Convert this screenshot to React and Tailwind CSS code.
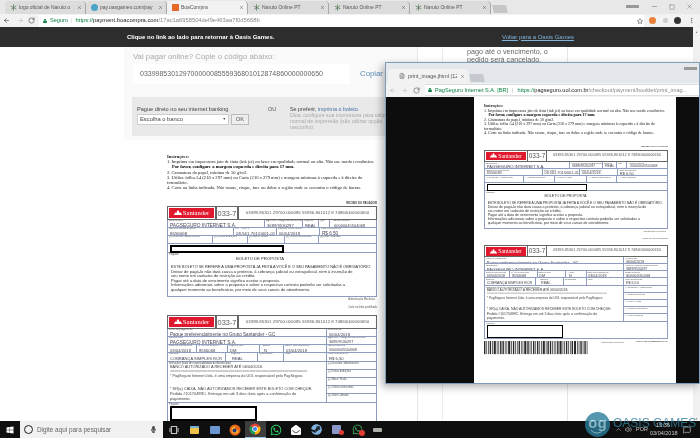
import React from "react";
import { FaWindows, FaSteam, FaWhatsapp, FaLock, FaRegStar, FaMicrophone, FaEnvelopeOpen } from "react-icons/fa";
import { ArrowLeft, ArrowRight, RotateCw, MoreVertical, Minus, Square, X, FileText, ChevronUp, Volume2, MessageSquare } from "lucide-react";

const sans = "font-['Liberation_Sans',Arial,sans-serif]";
const serif = "font-['Liberation_Serif','Times_New_Roman',serif]";

const Ninja = () => (
  <svg width="7" height="7" viewBox="0 0 10 10" className="shrink-0" fill="none" stroke="#5c7a5c" strokeWidth="1.1">
    <path d="M5 0.5v9M1 3l8 4M9 2.5l-7 5" />
  </svg>
);

function Tab({ label, active, icon }) {
  return (
    <div className={`flex items-center gap-[2px] h-[13px] w-[81px] pl-[5px] pr-[3px] text-[5px] rounded-t-sm border-r border-[#a8a8a8] shrink-0 ${active ? "bg-[#f2f2f2]" : "bg-[#dcdcdc]"}`}>
      {icon}
      <span className="flex-1 whitespace-nowrap overflow-hidden text-[#555]">{label}</span>
      <X size={5} className="text-[#444] shrink-0" />
    </div>
  );
}

function Cell({ label, value, size = "text-[4.8px]", className = "" }) {
  return (
    <div className={`border-r border-[#8e9cc0] last:border-r-0 px-[1px] overflow-hidden leading-none min-w-0 ${className}`}>
      <div className="text-[2.6px] text-[#555] whitespace-nowrap h-[3px]">{label}</div>
      <div className={`${size} text-[#445] whitespace-nowrap pl-[1px] mt-[0.5px]`}>{value}</div>
    </div>
  );
}

function Row({ children, h, cols }) {
  return <div className={`grid border-b border-[#8e9cc0] ${h} ${cols}`}>{children}</div>;
}

function Head() {
  return (
    <div className="flex h-[14px] border border-[#666] bg-white">
      <div className="w-[49px] border-r-2 border-[#666] p-[1px] shrink-0">
        <div className={`h-full bg-[#e0182d] text-white flex items-center justify-center gap-[1px] text-[6.6px] ${serif}`}>
          <svg width="8" height="6" viewBox="0 0 8 6" fill="#fff"><path d="M4 0c1 1 1.5 1.5 1 3 1-.5 1-1 1-1 1 1 2 2 2 3H0c0-1 1-2 2-3 0 .5 0 1 .5 1C2.5 2 3 1 4 0z" /></svg>
          <span>Santander</span>
        </div>
      </div>
      <div className="w-[22px] border-r-2 border-[#666] text-[7.4px] text-[#555] flex items-center justify-center shrink-0 whitespace-nowrap">033-7</div>
      <div className="flex-1 text-[4.4px] text-[#555] flex items-center justify-center whitespace-nowrap overflow-hidden">03399.85301 29700.000085 55936.801012 8 74860000000650</div>
    </div>
  );
}

const bars = [2,1,1,2,1,3,1,1,2,2,1,1,3,1,2,1,1,2,1,1,3,2,1,1,2,1,2,1,1,3,1,2,2,1,1,1,2,3,1,1,2,1,1,2,3,1,1,2,1,2,1,1,2,1,3,1];

function Barcode() {
  let x = 0;
  return (
    <svg width="119" height="15" className="block shrink-0">
      {bars.map((b, i) => {
        const r = <rect key={i} x={x} y="0" width={b * 0.8} height="15" fill="#2a2a2a" />;
        x += b * 0.8 + 1.1;
        return r;
      })}
    </svg>
  );
}

function Boleto({ popup }) {
  return (
    <div className={`w-[210px] text-[#333] ${sans} ${popup ? "[zoom:0.875]" : ""}`}>
      <div className={`${serif} text-[4.6px] leading-[5.2px] text-[#222] mb-[12px]`}>
        <p className="font-bold">Instruções:</p>
        <p>1. Imprima em impressora jato de tinta (ink jet) ou laser em qualidade normal ou alta. Não use modo econômico.</p>
        <p className="font-bold pl-[5px] text-[#000]">Por favor, configure a margem esquerda e direita para 17 mm.</p>
        <p>2. Gramatura do papel, mínima de 50 g/m2.</p>
        <p>3. Utilize folha A4 (210 x 297 mm) ou Carta (216 x 279 mm) e margens mínimas à esquerda e à direita do formulário.</p>
        <p>4. Corte na linha indicada. Não rasure, risque, fure ou dobre a região onde se encontra o código de barras.</p>
      </div>
      <div className="text-right text-[2.8px] font-bold text-[#444] leading-[3px] mb-[1px]">RECIBO DO PAGADOR</div>
      <Head />
      <div className="border-x border-[#8e9cc0]">
        <Row h="h-[8px]" cols="grid-cols-[97px_38px_16px_11px_1fr]">
          <Cell label="Beneficiário" value="PAGSEGURO INTERNET S.A." />
          <Cell label="Agência / Código do Beneficiário" value="3689/9530297" size="text-[4.2px]" />
          <Cell label="Espécie" value="REAL" size="text-[4.2px]" />
          <Cell label="Qtd" value="" />
          <Cell label="Nosso número" value="00000045504068" size="text-[4px]" className="pl-[3px]" />
        </Row>
        <Row h="h-[8px]" cols="grid-cols-[66px_43px_43px_1fr]">
          <Cell label="Número do documento" value="8556068" size="text-[4.4px]" />
          <Cell label="CPF / CNPJ" value="08.561.701/0001-01" size="text-[4.4px]" />
          <Cell label="Data de Vencimento" value="06/04/2018" size="text-[4.2px]" />
          <Cell label="Valor Documento" value="R$ 6,50" size="text-[4.6px]" />
        </Row>
        <Row h="h-[8px]" cols="grid-cols-[45px_35px_37px_34px_1fr]">
          <Cell label="(-) Desconto / Abatimentos" value="" />
          <Cell label="(-) Outras deduções" value="" />
          <Cell label="(+) Mora / Multa" value="" />
          <Cell label="(+) Outros acréscimos" value="" />
          <Cell label="(=) Valor Cobrado" value="" />
        </Row>
        <Row h="h-[9px]" cols="grid-cols-1">
          <div className="pl-[2px] pt-[1px]"><div className="w-[114px] h-[8px] border-2 border-black bg-white" /></div>
        </Row>
        <div className="text-[2.6px] text-[#555] leading-[3px] pl-[1px]">Pagador</div>
        <div className="border-b border-[#8e9cc0] h-[40px] px-[3px] text-[4.1px] leading-[4.6px] text-[#333]">
          <p className="text-[4.2px] pl-[65px] mb-[3px] mt-[1px] whitespace-nowrap">BOLETO DE PROPOSTA</p>
          <p className="text-[3.85px] whitespace-nowrap">ESTE BOLETO SE REFERE A UMA PROPOSTA JÁ FEITA A VOCÊ E O SEU PAGAMENTO NÃO É OBRIGATÓRIO.</p>
          <p className="whitespace-nowrap">Deixar de pagá-lo não dará causa a protesto, à cobrança judicial ou extrajudicial, nem à inserção de</p>
          <p className="whitespace-nowrap">seu nome em cadastro de restrição ao crédito.</p>
          <p className="whitespace-nowrap">Pagar até a data de vencimento significa aceitar a proposta.</p>
          <p className="whitespace-nowrap">Informações adicionais sobre a proposta e sobre o respectivo contrato poderão ser solicitadas a</p>
          <p className="whitespace-nowrap">qualquer momento ao beneficiário, por meio de seus canais de atendimento.</p>
        </div>
      </div>
      <div className="text-right text-[2.6px] text-[#555] leading-[3px] mt-[1px] pr-[2px]">Autenticação Mecânica</div>
      <div className="text-right text-[2.6px] text-[#555] leading-[3px] mt-[5px] mb-[6px]">Corte na linha pontilhada</div>
      <Head />
      <div className="border-x border-[#8e9cc0] grid grid-cols-[159px_1fr]">
        <div className="border-r border-[#8e9cc0]">
          <Row h="h-[8px]" cols="grid-cols-1"><Cell label="Local de pagamento" value="Pague preferencialmente no Grupo Santander - GC" size="text-[4.6px]" /></Row>
          <Row h="h-[8px]" cols="grid-cols-1"><Cell label="Beneficiário" value="PAGSEGURO INTERNET S.A." /></Row>
          <Row h="h-[8px]" cols="grid-cols-[29px_31px_32px_24px_1fr]">
            <Cell label="Data do Documento" value="03/04/2018" size="text-[4.2px]" />
            <Cell label="Nº do Documento" value="8556068" size="text-[4.2px]" />
            <Cell label="Espécie doc." value="DM" size="text-[4.2px]" />
            <Cell label="Aceite" value="N" size="text-[4.2px]" className="pl-[3px]" />
            <Cell label="Data Processamento" value="03/04/2018" size="text-[4.2px]" />
          </Row>
          <Row h="h-[9px]" cols="grid-cols-[58px_32px_26px_1fr]">
            <Cell label="Carteira" value="COBRANÇA SIMPLES RCR" size="text-[4.1px]" />
            <Cell label="Espécie" value="REAL" size="text-[4.2px]" className="pl-[5px]" />
            <Cell label="Quantidade" value="" />
            <Cell label="Valor" value="" />
          </Row>
          <div className="h-[40px] text-[3.9px] leading-[4px] px-[2px] text-[#444]">
            <p className="text-[2.6px] leading-[3px] -ml-[1px] whitespace-nowrap">Instruções (texto de responsabilidade do Beneficiário)</p>
            <p className="whitespace-nowrap">BANCO AUTORIZADO A RECEBER ATÉ 06/04/2018.</p>
            <p className="leading-[3px] tracking-tighter text-[#999] whitespace-nowrap overflow-hidden">==================================================================</p>
            <p className="mt-[2px] whitespace-nowrap text-[3.7px]">* PagSeguro Internet Ltda. é uma empresa do UOL responsável pelo PagSeguro.</p>
            <p className="mt-[9px] whitespace-nowrap">* SR(a) CAIXA, NÃO AUTORIZAMOS RECEBER ESTE BOLETO COM CHEQUE.</p>
            <p className="mt-[1px] whitespace-nowrap">Pedido #1017049RC. Entrega em até 3 dias úteis após a confirmação do</p>
            <p className="mt-[1px]">pagamento.</p>
          </div>
        </div>
        <div>
          <Row h="h-[8px]" cols="grid-cols-1"><Cell label="Vencimento" value="06/04/2018" size="text-[4.2px]" /></Row>
          <Row h="h-[8px]" cols="grid-cols-1"><Cell label="Agência / Código do Beneficiário" value="3689/9530297" size="text-[3.8px]" /></Row>
          <Row h="h-[8px]" cols="grid-cols-1"><Cell label="Nosso Número" value="00000045504068" size="text-[3.6px]" /></Row>
          <Row h="h-[9px]" cols="grid-cols-1"><Cell label="Valor Documento" value="R$ 6,50" size="text-[4.2px]" /></Row>
          {["(-) Desconto / Abatimentos", "(-) Outras deduções", "(+) Mora / Multa", "(+) Outros acréscimos", "(=) Valor Cobrado"].map((t) => (
            <div key={t} className="h-[8px] border-b border-[#8e9cc0] text-[2.6px] leading-[3px] px-[1px] text-[#555] last:border-b-0">{t}</div>
          ))}
        </div>
      </div>
      <div className="border border-[#8e9cc0] h-[20px]">
        <div className="text-[2.6px] text-[#555] leading-[3px] pl-[1px]">Pagador</div>
        <div className="ml-[2px] w-[87px] h-[15px] border-2 border-black bg-white" />
      </div>
      <div className="flex items-start mt-[3px]">
        <Barcode />
        <div className="text-[2.6px] text-[#555] leading-[3px] ml-[14px] whitespace-nowrap">Autenticação Mecânica</div>
        <div className="flex-1" />
        <div className="text-[2.8px] font-bold text-[#444] leading-[3px] whitespace-nowrap">FICHA DE COMPENSAÇÃO</div>
      </div>
    </div>
  );
}

function Popup() {
  return (
    <div className="absolute left-[385px] top-[62px] w-[315px] h-[322px] flex flex-col bg-[#e4e8ec] border border-[#7f9db9] shadow-[-3px_3px_8px_rgba(0,0,0,0.3)] overflow-hidden">
      <div className="h-[20px] flex items-end pl-[2px] pr-[2px] shrink-0">
        <div className="w-[81px] h-[14px] bg-[#f2f2f2] rounded-t-sm flex items-center gap-[3px] pl-[11px] pr-[4px] text-[5.4px] text-[#555] shrink-0">
          <FileText size={6} className="shrink-0" />
          <span className="whitespace-nowrap overflow-hidden flex-1">print_image.jhtml (1240×</span>
          <X size={5} className="shrink-0" />
        </div>
        <div className="w-[14px] h-[8px] ml-[1px] mb-[1px] bg-[#c6cad0] skew-x-12" />
        <div className="flex-1" />
        <div className="self-start mt-[4px] w-[13px] h-[3px] bg-[#999] blur-[0.5px]" />
      </div>
      <div className="h-[14px] bg-[#f2f2f2] flex items-center gap-[5px] pl-[3px] shrink-0">
        <ArrowLeft size={7} className="text-[#bbb]" />
        <ArrowRight size={7} className="text-[#bbb]" />
        <RotateCw size={7} className="text-[#555]" />
        <div className="flex-1 h-[12px] bg-white flex items-center gap-[3px] pl-[3px] text-[5.6px] border-y border-[#ddd] whitespace-nowrap overflow-hidden">
          <FaLock size={4} className="text-[#0b8043] shrink-0" />
          <span className="text-[#0b8043]">PagSeguro Internet S.A. [BR]</span>
          <span className="text-[#bbb] mx-[1px]">|</span>
          <span className="text-[#888]"><span className="text-[#0b8043]">https://</span><span className="text-[#222]">pagseguro.uol.com.br</span>/checkout/payment/booklet/print_imag...</span>
        </div>
      </div>
      <div className="flex-1 bg-[#0d0d0d] flex pl-[88px] min-h-0 overflow-hidden">
        <div className="w-[202px] bg-white pl-[10px] pt-[7px] overflow-hidden">
          <Boleto popup />
        </div>
      </div>
    </div>
  );
}

const ChromeIcon = ({ s = 12 }) => (
  <svg width={s} height={s} viewBox="0 0 24 24">
    <circle cx="12" cy="12" r="11" fill="#db4437" />
    <path d="M12 12 L2.5 6.5 A11 11 0 0 0 12 23 Z" fill="#0f9d58" />
    <path d="M12 12 L12 23 A11 11 0 0 0 21.5 6.5 Z" fill="#f4b400" />
    <circle cx="12" cy="12" r="5.5" fill="#fff" />
    <circle cx="12" cy="12" r="4.2" fill="#4285f4" />
  </svg>
);

const FirefoxIcon = () => (
  <svg width="12" height="12" viewBox="0 0 24 24">
    <circle cx="12" cy="12" r="11" fill="#e8661c" />
    <path d="M12 5a7 7 0 1 0 7 7c-2 1-4 0-5-2-1 1-3 0-2-5z" fill="#f7b42c" />
    <circle cx="11" cy="13" r="4" fill="#2a3a7a" />
  </svg>
);

function Slot({ children, active }) {
  return <div className={`w-[20.4px] h-full flex items-center justify-center shrink-0 ${active ? "bg-[#3c3c3c] border-b border-[#9cc4e4]" : ""}`}>{children}</div>;
}

function Taskbar() {
  return (
    <div className="h-[17px] bg-[#0f0f0f] flex items-center shrink-0 relative overflow-hidden">
      <div className="w-[20px] flex justify-center shrink-0 text-white"><FaWindows size={8} /></div>
      <div className="w-[143px] h-full bg-[#f1f1f1] flex items-center pl-[4px] gap-[4px] text-[6.4px] text-[#666] shrink-0">
        <span className="w-[9px] h-[9px] rounded-full border-[1.5px] border-[#222] shrink-0" />
        <span className="flex-1 whitespace-nowrap">Digite aqui para pesquisar</span>
        <FaMicrophone size={7} className="text-[#444] mr-[6px]" />
      </div>
      <div className="w-[21px] flex justify-center text-[#ddd] shrink-0"><svg width="10" height="8" viewBox="0 0 10 9" fill="none" stroke="currentColor"><rect x="2" y="0.5" width="6" height="8" /><path d="M0.5 2v5M9.5 2v5" /></svg></div>
      <Slot><div className="w-[9px] h-[8px] bg-[#f0c24a] rounded-[1px] border-t-[2px] border-[#6fb2d8]" /></Slot>
      <Slot><div className="w-[10px] h-[8px] bg-[#6a97d0] rounded-[1px]" /></Slot>
      <Slot><FirefoxIcon /></Slot>
      <Slot active><ChromeIcon /></Slot>
      <Slot><FaWhatsapp size={12} className="text-[#2fd366]" /></Slot>
      <Slot><FaEnvelopeOpen size={10} className="text-white" /></Slot>
      <Slot><FaSteam size={11} className="text-[#7fb2de]" /></Slot>
      <Slot><div className="relative"><div className="w-[9px] h-[9px] bg-[#8a95c8] rounded-[1px]" /><span className="absolute -right-[3px] -bottom-[1px] w-[5px] h-[5px] rounded-full bg-[#e03c32]" /></div></Slot>
      <Slot><div className="relative"><FaWhatsapp size={11} className="text-[#3ea85a]" /><span className="absolute -right-[2px] -bottom-[1px] w-[6px] h-[6px] rounded-full bg-[#e03c32]" /></div></Slot>
      <Slot><div className="w-[9px] h-[4px] bg-[#aab0a8] rounded-[1px]" /></Slot>
      <div className="flex-1" />
      <div className="flex items-center text-[#ccc] text-[5.5px] pr-[9px] relative z-20">
        <ChevronUp size={7} />
        <Volume2 size={7} className="ml-[3px]" />
        <span className="text-[5.5px] w-[11px] ml-[4px] whitespace-nowrap">POR</span>
        <div className="text-center leading-[7.5px] w-[26px] ml-[3px]"><div>15:36</div><div>03/04/2018</div></div>
        <MessageSquare size={8} className="ml-[7px]" />
      </div>
    </div>
  );
}

function Watermark() {
  return (
    <div className="absolute left-[585px] top-[412px] flex items-center gap-[3px] pointer-events-none opacity-80">
      <div className="relative w-[25px] h-[25px] rounded-full bg-[#2b7c9c] text-[#a5dcee] text-[15px] font-bold flex items-center justify-center leading-none pb-[5px]">
        og
        <svg width="14" height="5" viewBox="0 0 14 5" className="absolute bottom-[3px] left-[5px]" fill="none" stroke="#a5dcee" strokeWidth="1"><path d="M1 1c3 4 9 4 12 0" /></svg>
      </div>
      <span className={`text-[#2f7f9e] text-[12px] leading-[12px] -mt-[3px] whitespace-nowrap ${sans}`}>OASIS GAMES</span>
    </div>
  );
}

export default function App() {
  return (
    <div className={`relative w-[700px] h-[438px] overflow-hidden flex flex-col bg-white blur-[0.35px] ${sans}`}>
      <div className="h-[14px] bg-[#e8e8e8] flex items-end pl-[5px] shrink-0">
        <Tab label="logo oficial de Naruto o" icon={<Ninja />} />
        <Tab label="pay.oasgames.com/pay" icon={<span className="w-[7px] h-[7px] rounded-full bg-[#4ba3c7] shrink-0" />} />
        <Tab active label="BoaCompra" icon={<span className="w-[7px] h-[7px] bg-[#e8682a] shrink-0" />} />
        <Tab label="Naruto Online PT" icon={<Ninja />} />
        <Tab label="Naruto Online PT" icon={<Ninja />} />
        <Tab label="Naruto Online PT" icon={<Ninja />} />
        <div className="w-[14px] h-[8px] ml-[2px] mb-[1px] bg-[#c6c6c6] skew-x-12 shrink-0" />
        <div className="flex-1 self-start flex items-center justify-end gap-[11px] pr-[7px] pt-[3px] text-[#777]">
          <div className="w-[13px] h-[3px] bg-[#999] blur-[0.5px] mr-[1px]" />
          <Minus size={7} /><Square size={6} /><X size={7} />
        </div>
      </div>
      <div className="h-[13px] bg-[#f2f2f2] flex items-center pl-[3px] shrink-0">
        <ArrowLeft size={7} className="text-[#444]" />
        <ArrowRight size={7} className="text-[#bbb] ml-[7px]" />
        <RotateCw size={7} className="text-[#444] ml-[4px]" />
        <div className="w-[605px] ml-[4px] h-[12px] bg-white flex items-center gap-[2px] pl-[4px] text-[5.8px] whitespace-nowrap shrink-0">
          <FaLock size={4} className="text-[#0b8043] mr-[1px]" />
          <span className="text-[#0b8043] text-[5.6px]">Seguro</span>
          <span className="text-[#ccc] mx-[1px]">|</span>
          <span className="text-[#0b8043]">https://<span className="text-[#222]">payment.boacompra.com</span><span className="text-[#888]">/17ac1a6958504def9e463aa7f0d5668b</span></span>
          <span className="flex-1" />
          <FaRegStar size={6} className="text-[#555] mr-[1px]" />
        </div>
        <div className="flex items-center flex-1 justify-between pl-[5px] pr-[5px]">
          <span className="w-[7px] h-[7px] rounded-full bg-[#e8803a]" />
          <span className="w-[5px] h-[5px] bg-[#ccc] rounded-sm" />
          <span className="w-[7px] h-[7px] bg-[#333] rounded-sm" />
          <MoreVertical size={7} className="text-[#555]" />
        </div>
      </div>
      <div className="flex-1 flex min-h-0">
        <div className="flex-1 flex flex-col min-w-0">
          <div className="h-[20px] bg-[#2d2d2d] flex items-center shrink-0 text-[6px] text-white whitespace-nowrap">
            <span className="ml-[127px] w-[147px] font-semibold">Clique no link ao lado para retornar à Oasis Games.</span>
            <span className="ml-[228px] text-[#7db3dc] underline">Voltar para a Oasis Games</span>
          </div>
          <div className="flex-1 flex min-h-0">
            <div className="w-[124px] bg-white shrink-0" />
            <div className="w-[294px] bg-[#fafafa] border-r border-[#e6e6e6] flex flex-col shrink-0 min-h-0 overflow-hidden">
              <div className="pl-[9px] shrink-0">
                <p className="text-[7.8px] text-[#aaa] mt-[5px] leading-[10px] whitespace-nowrap">Vai pagar online? Copie o código abaixo:</p>
                <div className="flex items-center mt-[2px]">
                  <div className="h-[20px] bg-white flex items-center pl-[7px] text-[#666] text-[7px] w-[217px] shrink-0">03399853012970000008555936801012874860000000650</div>
                  <span className="ml-[10px] text-[7.8px] text-[#5b8db8] whitespace-nowrap">Copiar o</span>
                </div>
              </div>
              <div className="ml-[8px] mt-[13px] h-[39px] bg-[#e9e9e9] flex pl-[5px] pt-[9px] shrink-0 w-[286px]">
                <div className="w-[131px] shrink-0">
                  <p className="text-[5.6px] leading-[7px] text-[#444] whitespace-nowrap">Pague direto no seu internet banking</p>
                  <div className="flex gap-[2px] mt-[1px]">
                    <div className="w-[92px] h-[11px] bg-white border border-[#ccc] text-[5.8px] text-[#444] flex items-center justify-between px-[2px]"><span>Escolha o banco</span><span className="text-[3.5px]">▼</span></div>
                    <div className="w-[18px] h-[11px] bg-[#eee] border border-[#bbb] text-[5.8px] text-[#555] flex items-center justify-center">OK</div>
                  </div>
                </div>
                <span className="text-[5.6px] leading-[7px] text-[#555] w-[22px] shrink-0">OU</span>
                <div className="text-[5.2px] leading-[5.8px] text-[#aaa] whitespace-nowrap">
                  <p className="text-[5.4px] leading-[7px] text-[#444]">Se preferir, <span className="text-[#4a6fa5]">imprima o boleto.</span></p>
                  <p>Dica: configure sua impressora para utilizar</p>
                  <p>normal de impressão (não utilizar opção</p>
                  <p>rascunho).</p>
                </div>
              </div>
              <div className="bg-white mt-[4px] flex-1 pl-[43px] pt-[14px] min-h-0 overflow-hidden">
                <Boleto />
              </div>
            </div>
            <div className="w-[25px] bg-white border-r border-[#ececec] shrink-0" />
            <div className="w-[125px] bg-white border-r border-[#e6e6e6] pl-[24px] text-[7.2px] leading-[8px] text-[#666] shrink-0 whitespace-nowrap overflow-hidden pt-[1px]">
              <p>pago até o vencimento, o</p>
              <p>pedido será cancelado.</p>
            </div>
            <div className="flex-1 bg-white" />
          </div>
        </div>
        <div className="w-[7px] bg-[#f1f1f1] shrink-0 flex flex-col items-center justify-between text-[3px] text-[#777] pt-[3px]">
          <span>▲</span><span>▼</span>
        </div>
      </div>
      <Taskbar />
      <Popup />
      <Watermark />
    </div>
  );
}
